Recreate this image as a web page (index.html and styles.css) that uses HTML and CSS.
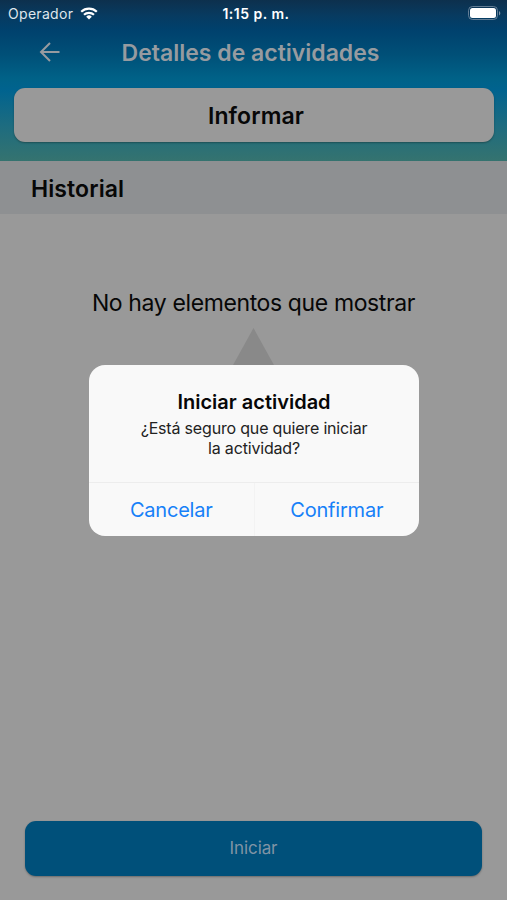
FILE: index.html
```html
<!DOCTYPE html>
<html lang="es">
<head>
    <meta charset="UTF-8">
    <meta name="viewport" content="width=device-width, initial-scale=1.0">
    <title>Detalles de actividades</title>
    <link rel="stylesheet" href="styles.css">
</head>
<body>

<header class="header">
    <div class="status-bar">
        <div class="carrier">
            <span>Operador</span>
            <svg class="wifi" width="18" height="14" viewBox="0 0 18 14" fill="none" stroke="#fff" stroke-width="2.2">
                <path d="M1.2 4.700a11.2 11.2 0 0 1 15.6 0"/>
                <path d="M4 7.800a7.2 7.2 0 0 1 10 0"/>
                <path d="M9 12.500L6.2 9.700a4 4 0 0 1 5.6 0z" fill="#fff" stroke="none"/>
            </svg>
        </div>
        <span class="time">1:15 p. m.</span>
        <svg class="battery" width="33" height="15" viewBox="0 0 33 15">
            <rect x="0.5" y="0.5" width="29" height="13" rx="4" fill="none" stroke="#8094a8" stroke-opacity="0.75"/>
            <rect x="2" y="2" width="26" height="10" rx="2.5" fill="#fff"/>
            <path d="M31 5v4.500c1.800-.8 1.800-3.700 0-4.500z" fill="#8094a8"/>
        </svg>
    </div>
    <div class="nav">
        <svg class="back" width="22" height="20" viewBox="0 0 22 20" fill="none" stroke="#979ba0" stroke-width="2">
            <path d="M20.500 10H2M11 1L2 10l9 9"/>
        </svg>
        <h1 class="title">Detalles de actividades</h1>
    </div>
    <button class="report">Informar</button>
</header>

<h2 class="section">Historial</h2>

<main class="content">
    <p class="empty">No hay elementos que mostrar</p>
    <div class="triangle"></div>
    <button class="start">Iniciar</button>
</main>

<!-- Diálogo de confirmación -->
<div class="dialog">
    <div class="dialog-body">
        <h3 class="dialog-title">Iniciar actividad</h3>
        <p class="dialog-text">¿Está seguro que quiere iniciar<br>la actividad?</p>
    </div>
    <div class="dialog-actions">
        <button class="action">Cancelar</button>
        <button class="action">Confirmar</button>
    </div>
</div>

</body>
</html>
```

FILE: styles.css
```css
* {
    box-sizing: border-box;
}
body {
    display: flex;
    flex-direction: column;
    height: 900px;
    margin: 0;
    background-color: #999;
    color: #070707;
    font-family: Inter, "Liberation Sans", sans-serif;
    white-space: nowrap;
}
h1, h2, h3, p {
    margin: 0;
}
button {
    padding: 0;
    border: none;
    font-family: inherit;
    cursor: pointer;
}
.header {
    display: flex;
    flex-direction: column;
    height: 161px;
    background: linear-gradient(#0d304d 0, #073b61 16px, #00416d 30px, #005078 55px, #006288 79px, #00638f 90px, #1d6c80 125px, #35736f 161px);
}
.status-bar {
    display: grid;
    grid-template-columns: 1fr auto 1fr;
    align-items: center;
    height: 27px;
    padding: 0 6px 0 8px;
    color: #fff;
}
.carrier {
    display: flex;
    align-items: center;
    gap: 7px;
    color: #dfe6ec;
    font-size: 14px;
    letter-spacing: 0.3px;
}
.time {
    padding-left: 3px;
    font-size: 14px;
    font-weight: 600;
    letter-spacing: 0.5px;
}
.battery {
    justify-self: end;
}
.nav {
    display: grid;
    grid-template-columns: 97px 1fr 103px;
    align-items: center;
    height: 50px;
}
.back {
    margin-left: 39px;
}
.title {
    padding-top: 2px;
    color: #979ba0;
    font-size: 23px;
    font-weight: 600;
    text-align: center;
}
.report {
    height: 54px;
    margin: 11px 13px 0 14px;
    padding: 2px 0 0 4px;
    border-radius: 11px;
    background-color: #999;
    color: #070707;
    font-size: 23px;
    font-weight: 600;
    letter-spacing: 0.1px;
    box-shadow: 0 1px 2px rgba(0, 0, 0, 0.3);
}
.section {
    height: 53px;
    padding-left: 31px;
    background-color: #8e9092;
    font-size: 23px;
    font-weight: 600;
    letter-spacing: 0.1px;
    line-height: 56px;
}
.content {
    display: flex;
    flex: 1;
    flex-direction: column;
    align-items: center;
    padding: 74px 25px 24px;
}
.empty {
    font-size: 23px;
    letter-spacing: -0.38px;
    line-height: 30px;
}
.triangle {
    width: 42px;
    height: 38px;
    margin-top: 10px;
    background-color: #898989;
    clip-path: polygon(50% 0, 100% 100%, 0 100%);
}
.start {
    width: 100%;
    height: 55px;
    margin-top: auto;
    padding-bottom: 2px;
    border-radius: 11px;
    background-color: #00507a;
    color: #8094a5;
    font-size: 17px;
    letter-spacing: -0.1px;
    box-shadow: 0 1px 2px rgba(0, 0, 0, 0.3);
}
.dialog {
    position: absolute;
    top: 365px;
    left: 89px;
    display: flex;
    flex-direction: column;
    width: 330px;
    height: 171px;
    border-radius: 16px;
    background-color: #f9f9f9;
    overflow: hidden;
}
.dialog-body {
    height: 117px;
    padding-top: 23px;
    text-align: center;
}
.dialog-title {
    font-size: 20px;
    font-weight: 600;
    line-height: 28px;
}
.dialog-text {
    margin-top: 2px;
    color: #222;
    font-size: 16px;
    letter-spacing: -0.18px;
    line-height: 20px;
}
.dialog-actions {
    display: flex;
    flex: 1;
    border-top: 1px solid #ededed;
}
.action {
    flex: 1;
    background: none;
    color: #1680f8;
    font-size: 20px;
    letter-spacing: -0.2px;
}
.action + .action {
    border-left: 1px solid #f3f3f3;
}
```
